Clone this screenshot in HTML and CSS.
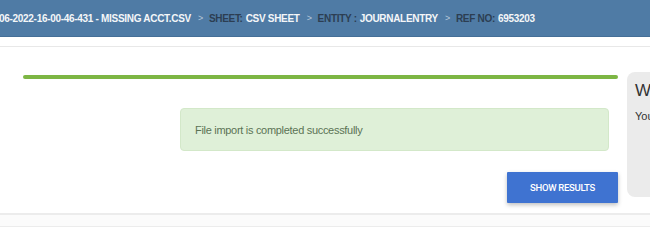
FILE: index.html
```html
<!DOCTYPE html>
<html>
<head>
<meta charset="utf-8">
<link rel="stylesheet" href="styles.css">
</head>
<body>
<header class="crumbs">
  <span class="value">06-2022-16-00-46-431 - MISSING ACCT.CSV</span>
  <span class="sep">&gt;</span>
  <span class="label">SHEET:</span><span class="value">CSV SHEET</span>
  <span class="sep">&gt;</span>
  <span class="label">ENTITY :</span><span class="value">JOURNALENTRY</span>
  <span class="sep">&gt;</span>
  <span class="label">REF NO:</span><span class="value">6953203</span>
</header>
<div class="subbar"></div>
<main class="content">
  <section class="import">
    <div class="progress"></div>
    <div class="alert">File import is completed successfully</div>
    <div class="actions"><button class="btn">SHOW RESULTS</button></div>
  </section>
  <aside class="panel">
    <h3 class="panel-title">What's next?</h3>
    <p class="panel-text">You can review the imported records.</p>
  </aside>
</main>
<div class="footer-strip"></div>
</body>
</html>
```

FILE: styles.css
```css
html, body {
  margin: 0;
  padding: 0;
  width: 650px;
  height: 232px;
  overflow: hidden;
  background: #ffffff;
  font-family: "Liberation Sans", Arial, sans-serif;
}

.crumbs {
  height: 37px;
  box-sizing: border-box;
  background: #4f7ba5;
  border-bottom: 1px solid #456f97;
  display: flex;
  align-items: center;
  white-space: nowrap;
  font-size: 10px;
  letter-spacing: -0.3px;
  font-weight: bold;
  padding-left: 0;
  margin-left: -1px;
  overflow: hidden;
}

.crumbs .value {
  color: #f4f6f8;
}

.crumbs .label {
  color: #2c3e52;
  margin-right: 3px;
}

.crumbs .sep {
  color: #b9c9da;
  font-weight: normal;
  font-size: 9px;
  margin: 0 6px 0 7px;
}

.subbar {
  height: 9px;
  border-bottom: 1px solid #e8e8e8;
  background: #ffffff;
}

.content {
  display: flex;
  align-items: flex-start;
  height: 168px;
  box-sizing: border-box;
  border-bottom: 2px solid #ececec;
  overflow: hidden;
}

.import {
  flex: 0 0 595px;
  margin-left: 23px;
  padding-top: 28px;
  display: flex;
  flex-direction: column;
}

.progress {
  height: 4px;
  border-radius: 2px;
  background: #7db644;
}

.alert {
  margin: 29px 9px 0 157px;
  height: 43px;
  box-sizing: border-box;
  background: #dff0d8;
  border: 1px solid #d3e8c9;
  border-radius: 4px;
  display: flex;
  align-items: center;
  padding-left: 14px;
  font-size: 11px;
  letter-spacing: -0.3px;
  color: #5b7355;
}

.actions {
  display: flex;
  justify-content: flex-end;
  margin-top: 21px;
}

.btn {
  width: 111px;
  height: 31px;
  border: none;
  border-radius: 1px;
  background: #3f73d1;
  color: #ffffff;
  font-family: Roboto, "Liberation Sans", sans-serif;
  font-size: 9.5px;
  font-weight: 500;
  letter-spacing: -0.3px;
  box-shadow: 0 2px 4px rgba(0, 0, 0, 0.25);
  padding: 0;
}

.panel {
  margin-left: 9px;
  margin-top: 25px;
  flex: 0 0 200px;
  height: 125px;
  box-sizing: border-box;
  background: #ebebeb;
  border-radius: 8px;
  padding: 9px 0 0 8px;
  white-space: nowrap;
}

.panel-title {
  margin: 0;
  font-size: 17px;
  font-weight: normal;
  color: #333333;
  line-height: 20px;
}

.panel-text {
  margin: 9px 0 0;
  font-size: 11px;
  color: #333333;
}

.footer-strip {
  height: 11px;
  background: #fbfbfb;
  border-bottom: 1px solid #ececec;
}
```
